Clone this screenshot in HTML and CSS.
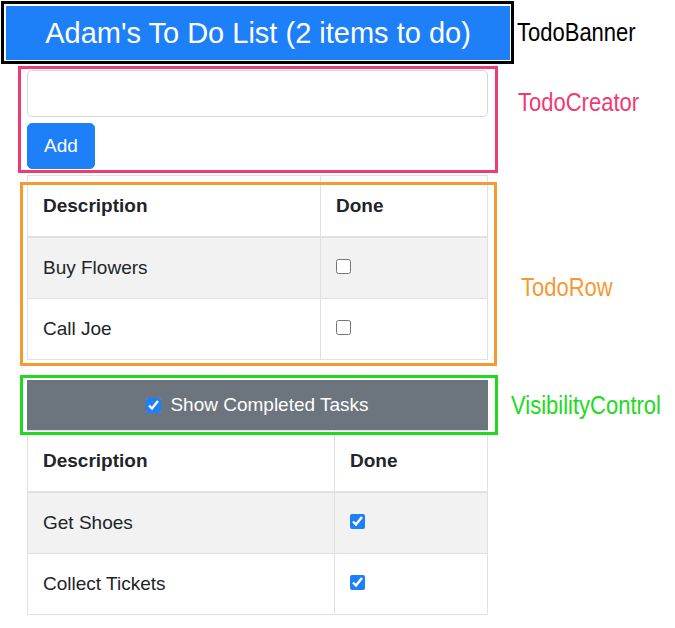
FILE: index.html
```
<!DOCTYPE html>
<html lang="en">
<head>
<meta charset="utf-8">
<title>Adam's To Do List</title>
<link rel="stylesheet" href="styles.css">
</head>
<body>
<div class="page">
  <div class="row row-center">
    <div class="banner-frame">
      <h4 class="banner">Adam's To Do List (2 items to do)</h4>
    </div>
    <span class="note note-banner">TodoBanner</span>
  </div>

  <div class="row row-creator">
    <div class="block creator">
      <input class="input" type="text">
      <button class="btn" type="button">Add</button>
    </div>
    <span class="note note-creator">TodoCreator</span>
  </div>

  <div class="row row-rows">
    <div class="block rows-block">
      <table class="table t1">
        <thead>
          <tr><th class="c-desc">Description</th><th>Done</th></tr>
        </thead>
        <tbody>
          <tr><td>Buy Flowers</td><td><input class="check" type="checkbox"></td></tr>
          <tr><td>Call Joe</td><td><input class="check" type="checkbox"></td></tr>
        </tbody>
      </table>
    </div>
    <span class="note note-row">TodoRow</span>
  </div>

  <div class="row row-center row-toggle">
    <div class="block toggle">
      <input class="check check-inline" type="checkbox" checked>
      <span>Show Completed Tasks</span>
    </div>
    <span class="note note-vis">VisibilityControl</span>
  </div>

  <div class="row">
    <div class="plain">
      <table class="table t2">
        <thead>
          <tr><th class="c-desc">Description</th><th>Done</th></tr>
        </thead>
        <tbody>
          <tr><td>Get Shoes</td><td><input class="check" type="checkbox" checked></td></tr>
          <tr><td>Collect Tickets</td><td><input class="check" type="checkbox" checked></td></tr>
        </tbody>
      </table>
    </div>
  </div>
</div>
</body>
</html>
```

FILE: styles.css
```
* { box-sizing: border-box; }

body {
  margin: 0;
  font-family: "Liberation Sans", Arial, sans-serif;
  color: #212529;
  background: #ffffff;
}

.page {
  display: flex;
  flex-direction: column;
}

.row {
  display: flex;
  align-items: flex-start;
}

.row-center {
  align-items: center;
}

.row-creator { margin-top: 6px; }
.row-rows { margin-top: 6px; }
.row-toggle { margin-top: 20px; }

/* Banner */
.banner-frame {
  flex-shrink: 0;
  margin: 1px 0 0 1px;
  border: 3px solid #000;
  padding: 2px 1px 1px 2px;
}

.banner {
  margin: 0;
  width: 504px;
  height: 54px;
  background: #1e80f8;
  color: #ffffff;
  font-size: 29px;
  font-weight: normal;
  line-height: 54px;
  text-align: center;
}

/* Annotation labels */
.note {
  flex-shrink: 0;
  font-size: 25px;
  line-height: 30px;
  white-space: nowrap;
  transform: scaleX(0.88);
  transform-origin: left center;
}

.note-banner { margin-left: 3px; color: #000; }
.note-creator { margin: 17px 0 0 30px; color: #f03a73; }
.note-row { margin: 97px 0 0 33px; color: #f59a30; }
.note-vis { margin-left: 23px; color: #20da20; }

/* Annotated blocks */
.block {
  position: relative;
  flex-shrink: 0;
  width: 461px;
  margin-left: 27px;
}

.block::after {
  content: "";
  position: absolute;
  border: 3px solid transparent;
  pointer-events: none;
}

.plain {
  flex-shrink: 0;
  width: 461px;
  margin-left: 27px;
}

/* Creator */
.creator {
  display: flex;
  flex-direction: column;
  align-items: flex-start;
}

.creator::after {
  top: -4px;
  bottom: -4px;
  left: -9px;
  right: -10px;
  border-color: #f03a73;
}

.input {
  width: 100%;
  height: 47px;
  margin: 0;
  border: 1px solid #d3d7db;
  border-radius: 5px;
  padding: 7px 15px;
  font-family: inherit;
  font-size: 19px;
  background: #fff;
}

.btn {
  margin-top: 6px;
  height: 46px;
  padding: 0 16px;
  border: 1px solid #1e80f8;
  border-radius: 5px;
  background: #1e80f8;
  color: #ffffff;
  font-family: inherit;
  font-size: 19px;
}

/* Tables */
.rows-block::after {
  top: 7px;
  bottom: -6px;
  left: -7px;
  right: -9px;
  border-color: #f59a30;
}

.table {
  width: 461px;
  border-collapse: collapse;
  font-size: 19px;
  line-height: 30px;
}

.table th,
.table td {
  border: 1px solid #dee2e6;
  padding: 15px;
  text-align: left;
  vertical-align: top;
}

.table thead th {
  border-bottom-width: 2px;
  font-weight: bold;
}

.table tbody tr:nth-child(odd) {
  background: #f2f2f2;
}

.t1 .c-desc { width: 293px; }
.t2 .c-desc { width: 307px; }

.check {
  display: block;
  width: 15px;
  height: 15px;
  margin: 6px 0 0 0;
  accent-color: #1e80f8;
}

/* Visibility control */
.toggle {
  height: 50px;
  background: #6c757d;
  color: #ffffff;
  display: flex;
  align-items: center;
  justify-content: center;
  gap: 9px;
  font-size: 19px;
}

.toggle::after {
  top: -5px;
  bottom: -5px;
  left: -7px;
  right: -10px;
  border-color: #20da20;
}

.check-inline {
  margin: 0;
}
```
